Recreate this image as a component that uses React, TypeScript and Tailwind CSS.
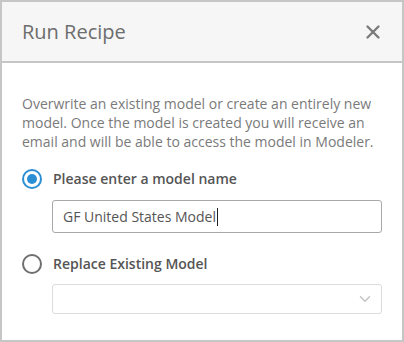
import { X, ChevronDown } from "lucide-react";

const font = { fontFamily: '"Open Sans", "Noto Sans", sans-serif' };

function Radio({ checked }: { checked: boolean }) {
  return (
    <span
      className={
        "flex h-[20px] w-[20px] shrink-0 items-center justify-center rounded-full border-2 " +
        (checked ? "border-[#2b8fd6]" : "border-[#6f6f6f]")
      }
    >
      {checked && <span className="h-[10px] w-[10px] rounded-full bg-[#2b8fd6]" />}
    </span>
  );
}

export default function App() {
  return (
    <div
      className="flex h-[342px] w-[404px] flex-col border-2 border-[#c6c6c6] bg-white"
      style={font}
    >
      {/* Header */}
      <header className="flex h-[61px] shrink-0 items-center justify-between border-b-2 border-[#c6c6c6] bg-[#f6f6f6] pl-[20px] pr-[18px]">
        <h1 className="text-[20px] font-normal text-[#6d6d6d]">Run Recipe</h1>
        <X className="h-[22px] w-[22px] text-[#7a7a7a]" strokeWidth={2.6} />
      </header>

      {/* Body */}
      <div className="flex flex-col px-[20px] pt-[31px]">
        <p className="text-[14px] leading-[19px] text-[#7a7a7a]">
          Overwrite an existing model or create an entirely new model. Once the
          model is created you will receive an email and will be able to access
          the model in Modeler.
        </p>

        <label className="mt-[17px] flex items-center gap-[11px]">
          <Radio checked />
          <span className="text-[14px] leading-[21px] font-semibold text-[#555]">
            Please enter a model name
          </span>
        </label>
        <div className="ml-[30px] mt-[11px] flex h-[33px] items-center rounded-[3px] border border-[#a8a8a8] px-[10px] text-[14px] text-[#555]">
          GF United States Model
          <span className="ml-px h-[18px] w-px bg-[#222]" />
        </div>

        <label className="mt-[20px] flex items-center gap-[11px]">
          <Radio checked={false} />
          <span className="text-[14px] leading-[21px] font-semibold text-[#555]">
            Replace Existing Model
          </span>
        </label>
        <div className="ml-[30px] mt-[10px] flex h-[30px] items-center justify-end rounded-[3px] border border-[#dcdcdc] pr-[7px]">
          <ChevronDown className="h-[18px] w-[18px] text-[#c4c4c4]" strokeWidth={2} />
        </div>
      </div>
    </div>
  );
}
